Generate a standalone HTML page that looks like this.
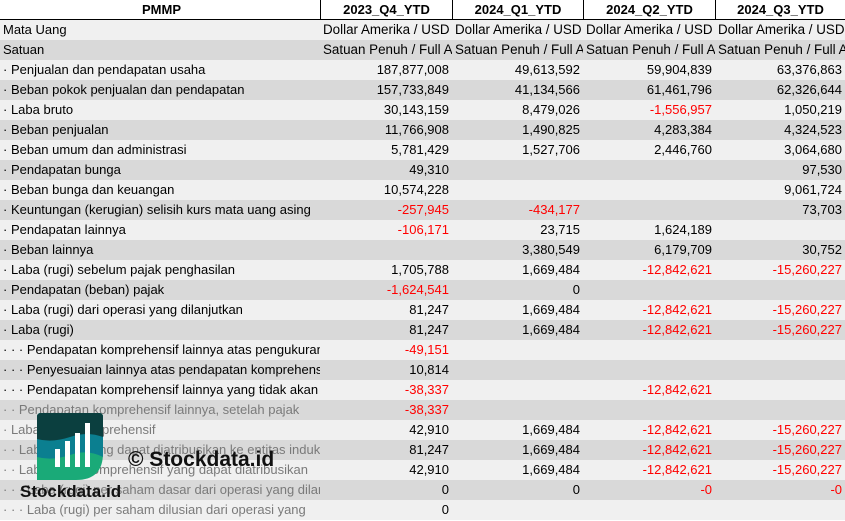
<!DOCTYPE html>
<html><head><meta charset="utf-8"><style>
*{margin:0;padding:0;box-sizing:border-box}
body{width:845px;height:521px;overflow:hidden;background:#fff;font-family:"Liberation Sans",sans-serif;font-size:13px;color:#000;position:relative}
.r{position:absolute;left:0;width:845px;height:20px;display:flex}
.r div{height:20px;line-height:20px;overflow:hidden;white-space:nowrap}
.c0{width:320px;padding-left:3px}
.c1{width:132px}.c2{width:131px}.c3{width:132px}.c4{width:130px}
.t{padding-left:3px;font-size:13.4px}
.n{text-align:right;padding-right:3px}
.l{background:#f0f0f0}.d{background:#d9d9d9}
.h{background:#fff;font-weight:bold;border-bottom:2px solid #000}
.h div{text-align:center;border-left:1px solid #000}
.h div:first-child{border-left:none}
.red{color:#f00}
.g{color:#7a7a7a}
</style></head><body>
<div class="r h" style="top:0;height:21px"><div class="c0">PMMP</div><div class="c1">2023_Q4_YTD</div><div class="c2">2024_Q1_YTD</div><div class="c3">2024_Q2_YTD</div><div class="c4">2024_Q3_YTD</div></div>
<div class="r l" style="top:20px"><div class="c0">Mata Uang</div><div class="c1 t">Dollar Amerika / USD</div><div class="c2 t">Dollar Amerika / USD</div><div class="c3 t">Dollar Amerika / USD</div><div class="c4 t">Dollar Amerika / USD</div></div>
<div class="r d" style="top:40px"><div class="c0">Satuan</div><div class="c1 t">Satuan Penuh / Full Amount</div><div class="c2 t">Satuan Penuh / Full Amount</div><div class="c3 t">Satuan Penuh / Full Amount</div><div class="c4 t">Satuan Penuh / Full Amount</div></div>
<div class="r l" style="top:60px"><div class="c0">· Penjualan dan pendapatan usaha</div><div class="c1 n">187,877,008</div><div class="c2 n">49,613,592</div><div class="c3 n">59,904,839</div><div class="c4 n">63,376,863</div></div>
<div class="r d" style="top:80px"><div class="c0">· Beban pokok penjualan dan pendapatan</div><div class="c1 n">157,733,849</div><div class="c2 n">41,134,566</div><div class="c3 n">61,461,796</div><div class="c4 n">62,326,644</div></div>
<div class="r l" style="top:100px"><div class="c0">· Laba bruto</div><div class="c1 n">30,143,159</div><div class="c2 n">8,479,026</div><div class="c3 n red">-1,556,957</div><div class="c4 n">1,050,219</div></div>
<div class="r d" style="top:120px"><div class="c0">· Beban penjualan</div><div class="c1 n">11,766,908</div><div class="c2 n">1,490,825</div><div class="c3 n">4,283,384</div><div class="c4 n">4,324,523</div></div>
<div class="r l" style="top:140px"><div class="c0">· Beban umum dan administrasi</div><div class="c1 n">5,781,429</div><div class="c2 n">1,527,706</div><div class="c3 n">2,446,760</div><div class="c4 n">3,064,680</div></div>
<div class="r d" style="top:160px"><div class="c0">· Pendapatan bunga</div><div class="c1 n">49,310</div><div class="c2 n"></div><div class="c3 n"></div><div class="c4 n">97,530</div></div>
<div class="r l" style="top:180px"><div class="c0">· Beban bunga dan keuangan</div><div class="c1 n">10,574,228</div><div class="c2 n"></div><div class="c3 n"></div><div class="c4 n">9,061,724</div></div>
<div class="r d" style="top:200px"><div class="c0">· Keuntungan (kerugian) selisih kurs mata uang asing</div><div class="c1 n red">-257,945</div><div class="c2 n red">-434,177</div><div class="c3 n"></div><div class="c4 n">73,703</div></div>
<div class="r l" style="top:220px"><div class="c0">· Pendapatan lainnya</div><div class="c1 n red">-106,171</div><div class="c2 n">23,715</div><div class="c3 n">1,624,189</div><div class="c4 n"></div></div>
<div class="r d" style="top:240px"><div class="c0">· Beban lainnya</div><div class="c1 n"></div><div class="c2 n">3,380,549</div><div class="c3 n">6,179,709</div><div class="c4 n">30,752</div></div>
<div class="r l" style="top:260px"><div class="c0">· Laba (rugi) sebelum pajak penghasilan</div><div class="c1 n">1,705,788</div><div class="c2 n">1,669,484</div><div class="c3 n red">-12,842,621</div><div class="c4 n red">-15,260,227</div></div>
<div class="r d" style="top:280px"><div class="c0">· Pendapatan (beban) pajak</div><div class="c1 n red">-1,624,541</div><div class="c2 n">0</div><div class="c3 n"></div><div class="c4 n"></div></div>
<div class="r l" style="top:300px"><div class="c0">· Laba (rugi) dari operasi yang dilanjutkan</div><div class="c1 n">81,247</div><div class="c2 n">1,669,484</div><div class="c3 n red">-12,842,621</div><div class="c4 n red">-15,260,227</div></div>
<div class="r d" style="top:320px"><div class="c0">· Laba (rugi)</div><div class="c1 n">81,247</div><div class="c2 n">1,669,484</div><div class="c3 n red">-12,842,621</div><div class="c4 n red">-15,260,227</div></div>
<div class="r l" style="top:340px"><div class="c0">· · · Pendapatan komprehensif lainnya atas pengukuran</div><div class="c1 n red">-49,151</div><div class="c2 n"></div><div class="c3 n"></div><div class="c4 n"></div></div>
<div class="r d" style="top:360px"><div class="c0">· · · Penyesuaian lainnya atas pendapatan komprehensif</div><div class="c1 n">10,814</div><div class="c2 n"></div><div class="c3 n"></div><div class="c4 n"></div></div>
<div class="r l" style="top:380px"><div class="c0">· · · Pendapatan komprehensif lainnya yang tidak akan</div><div class="c1 n red">-38,337</div><div class="c2 n"></div><div class="c3 n red">-12,842,621</div><div class="c4 n"></div></div>
<div class="r d" style="top:400px"><div class="c0 g">· · Pendapatan komprehensif lainnya, setelah pajak</div><div class="c1 n red">-38,337</div><div class="c2 n"></div><div class="c3 n"></div><div class="c4 n"></div></div>
<div class="r l" style="top:420px"><div class="c0 g">· Laba (rugi) komprehensif</div><div class="c1 n">42,910</div><div class="c2 n">1,669,484</div><div class="c3 n red">-12,842,621</div><div class="c4 n red">-15,260,227</div></div>
<div class="r d" style="top:440px"><div class="c0 g">· · Laba (rugi) yang dapat diatribusikan ke entitas induk</div><div class="c1 n">81,247</div><div class="c2 n">1,669,484</div><div class="c3 n red">-12,842,621</div><div class="c4 n red">-15,260,227</div></div>
<div class="r l" style="top:460px"><div class="c0 g">· · Laba (rugi) komprehensif yang dapat diatribusikan</div><div class="c1 n">42,910</div><div class="c2 n">1,669,484</div><div class="c3 n red">-12,842,621</div><div class="c4 n red">-15,260,227</div></div>
<div class="r d" style="top:480px"><div class="c0 g">· · · Laba (rugi) per saham dasar dari operasi yang dilanjutkan</div><div class="c1 n">0</div><div class="c2 n">0</div><div class="c3 n red">-0</div><div class="c4 n red">-0</div></div>
<div class="r l" style="top:500px"><div class="c0 g">· · · Laba (rugi) per saham dilusian dari operasi yang</div><div class="c1 n">0</div><div class="c2 n"></div><div class="c3 n"></div><div class="c4 n"></div></div>
<svg style="position:absolute;left:37px;top:413px" width="66" height="67" viewBox="0 0 66 67">
<defs><clipPath id="k"><path d="M0 4Q0 0 4 0H62Q66 0 66 4V40Q66 67 39 67H0Z"/></clipPath></defs>
<g clip-path="url(#k)">
<rect width="66" height="67" fill="#1aaa78"/>
<path d="M0 0H66V44Q50 36 33 42Q15 48 0 44Z" fill="#0b7f90"/>
<path d="M0 0H66V24Q50 18 33 24Q15 30 0 26Z" fill="#0b3f3f"/>
</g>
<rect x="18" y="36" width="5" height="18" fill="#fff"/>
<rect x="28" y="28" width="5" height="26" fill="#fff"/>
<rect x="38" y="20" width="5" height="34" fill="#fff"/>
<rect x="48" y="10" width="5" height="44" fill="#fff"/>
</svg>
<div style="position:absolute;left:20px;top:481px;font-weight:bold;font-size:17px;line-height:22px;color:#111">Stockdata.id</div>
<div style="position:absolute;left:128px;top:447px;font-weight:bold;font-size:21px;line-height:26px;color:#111">© Stockdata.id</div>
</body></html>
